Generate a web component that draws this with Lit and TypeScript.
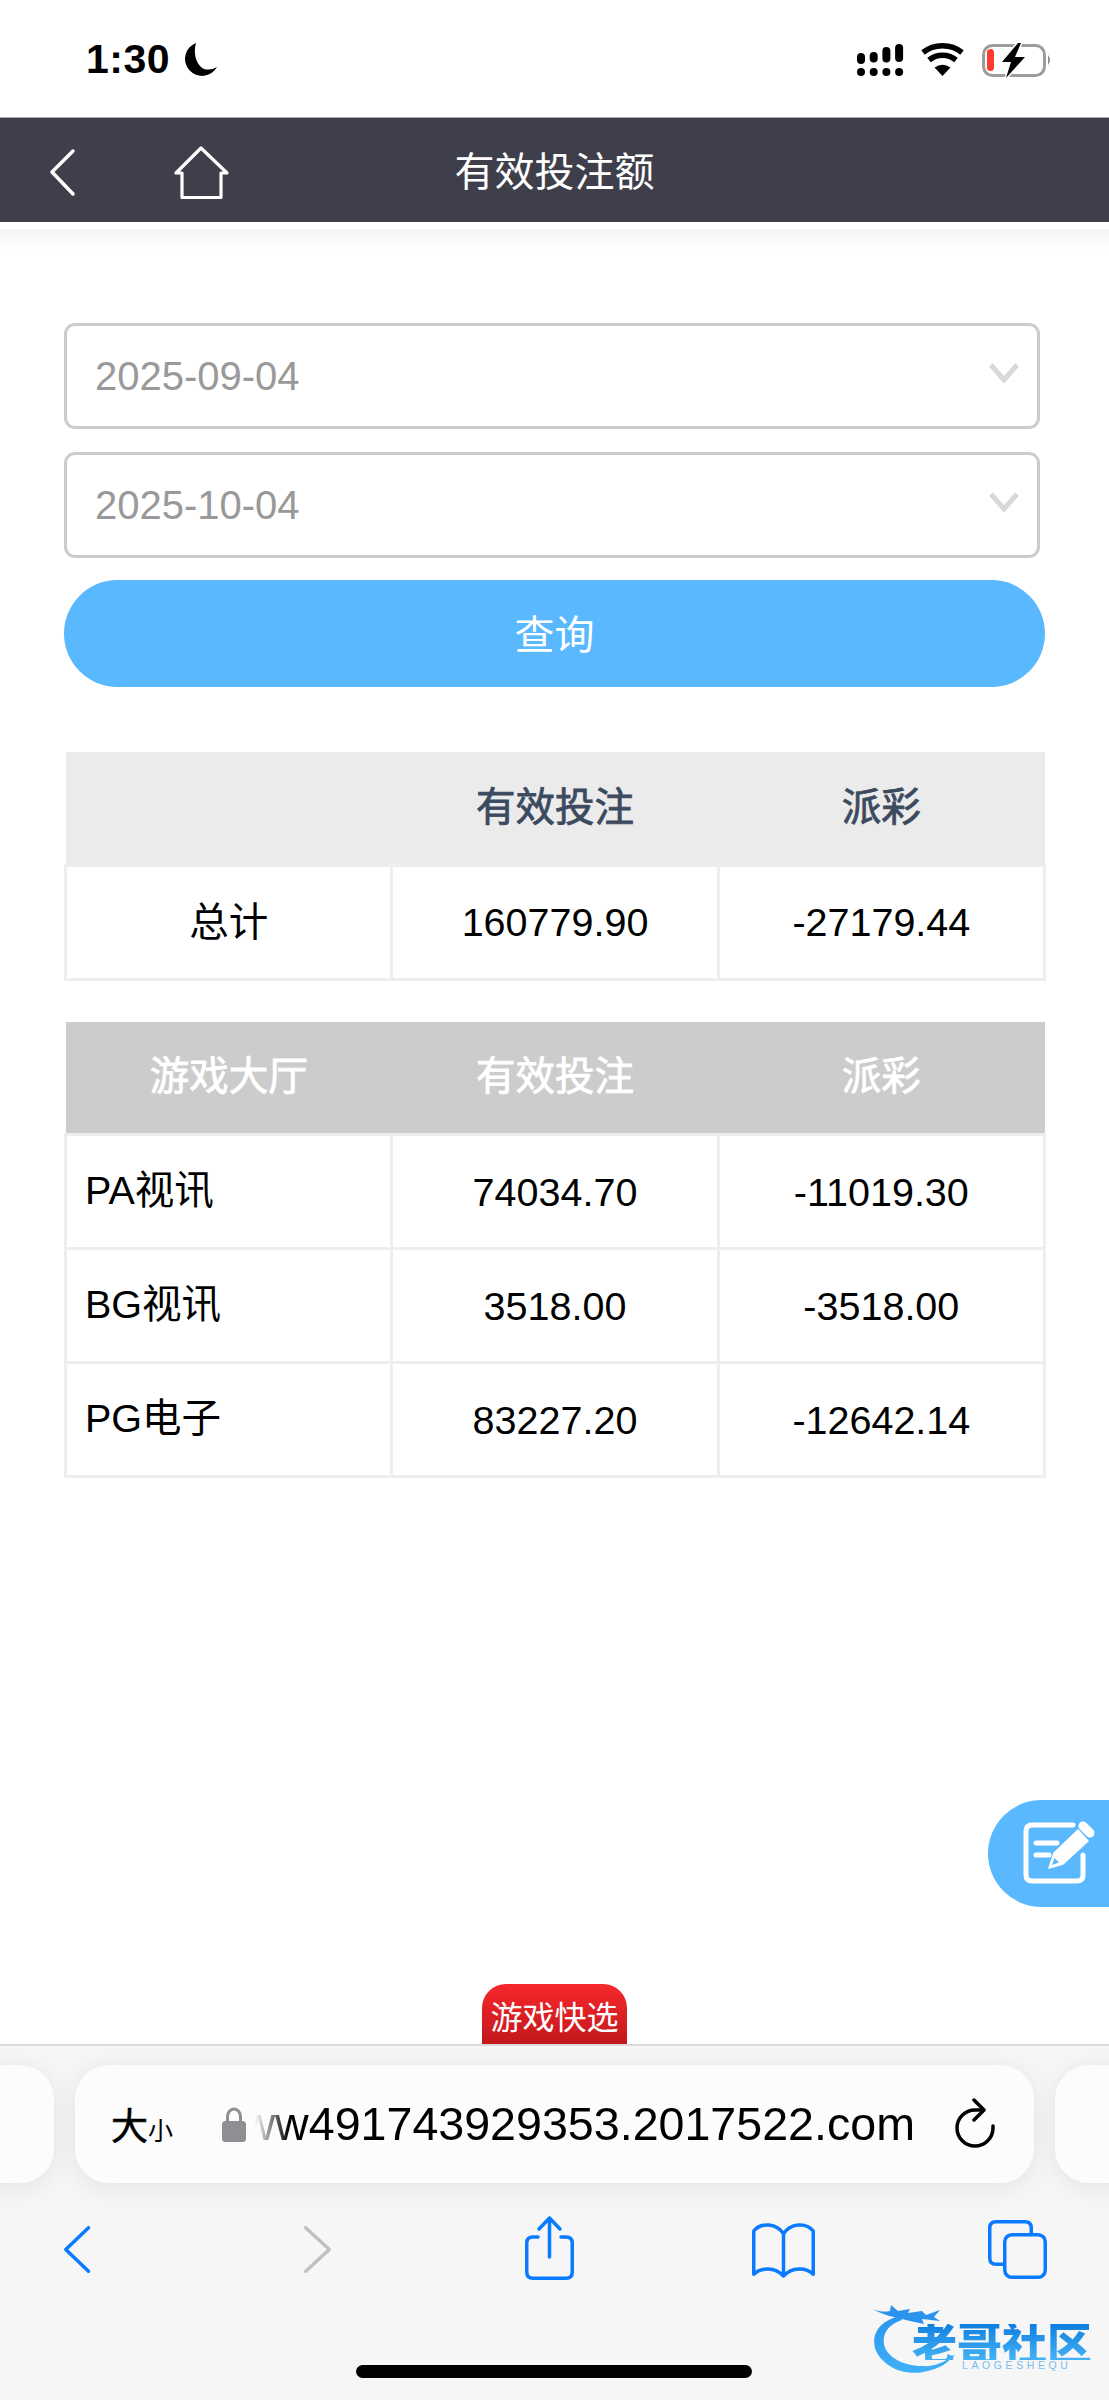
import { LitElement, html, css, svg } from "lit";
import { customElement } from "lit/decorators.js";

const CHEVRON = html`<svg class="chev" viewBox="0 0 30 20"><path d="M2 2 L15 17 L28 2" fill="none" stroke="#d9d9d9" stroke-width="5"/></svg>`;

const rows = [
  ["PA视讯", "74034.70", "-11019.30"],
  ["BG视讯", "3518.00", "-3518.00"],
  ["PG电子", "83227.20", "-12642.14"],
];

@customElement("app-root")
export class AppRoot extends LitElement {
  static styles = css`
    :host {
      display: flex;
      flex-direction: column;
      position: relative;
      width: 1109px;
      height: 2400px;
      overflow: hidden;
      background: #fff;
      font-family: "Liberation Sans", "Noto Sans CJK SC", sans-serif;
      color: #000;
    }
    .status {
      height: 117px;
      flex: none;
      box-sizing: border-box;
      padding: 2px 55px 0 86px;
      display: flex;
      align-items: center;
      justify-content: space-between;
    }
    .left { display: flex; align-items: center; gap: 14px; }
    .time { font-size: 41px; font-weight: 700; letter-spacing: 0.5px; line-height: 1; }
    .moon { width: 34px; height: 34px; display: block; }
    .sicons { display: block; width: 197px; height: 36px; margin-top: 5px; overflow: visible; }
    .nav {
      height: 105px;
      flex: none;
      background: #3f3f4b;
      border-top: 1px solid #a9a9ae;
      box-sizing: border-box;
      position: relative;
      display: flex;
      align-items: center;
      justify-content: center;
      padding-bottom: 3px;
      color: #fff;
      font-size: 40px;
    }
    .nav svg { position: absolute; left: 0; top: 0; width: 260px; height: 104px; }
    .shade {
      flex: none;
      height: 22px;
      margin-top: 7px;
      background: linear-gradient(#f4f4f4, #fff);
    }
    .main {
      flex: 1;
      display: flex;
      flex-direction: column;
      padding: 72px 63px 0 64px;
      min-height: 0;
    }
    .field {
      width: 976px;
      height: 106px;
      box-sizing: border-box;
      border: 3px solid #ccc;
      border-radius: 11px;
      display: flex;
      align-items: center;
      justify-content: space-between;
      padding: 0 18px 0 28px;
      font-size: 40px;
      color: #999;
      margin-bottom: 23px;
    }
    .chev { width: 30px; height: 20px; display: block; margin-top: -6px; }
    .go {
      width: 981px;
      height: 107px;
      box-sizing: border-box;
      padding-bottom: 4px;
      border-radius: 54px;
      background: #5ab8ff;
      color: #fff;
      font-size: 40px;
      display: flex;
      align-items: center;
      justify-content: center;
      margin-top: -1px;
    }
    table {
      width: 982px;
      table-layout: fixed;
      border-collapse: collapse;
      font-size: 39.5px;
      line-height: 44px;
      text-align: center;
    }
    .t1 { margin-top: 65px; }
    .t2 { margin-top: 41px; }
    th {
      height: 113px;
      padding: 0 0 2px;
      box-sizing: border-box;
      font-weight: 400;
      -webkit-text-stroke: 0.8px currentColor;
      background: #ebebeb;
      color: #3b4a5e;
    }
    .t2 th { background: #ccc; color: #fff; height: 113px; }
    td {
      height: 114px;
      box-sizing: border-box;
      padding: 0;
      border: 3px solid #eeeeee;
    }
    td.name { text-align: left; padding: 0 0 3px 18px; }
    td.cn { padding-bottom: 1px; }
    .tabwrap {
      margin-top: auto;
      display: flex;
      justify-content: center;
    }
    .tab {
      width: 145px;
      height: 60px;
      margin-left: -1px;
      box-sizing: border-box;
      padding-top: 2px;
      border-radius: 24px 24px 0 0;
      background: linear-gradient(#f6282d, #c2181c);
      color: #fff;
      font-size: 32px;
      display: flex;
      align-items: center;
      justify-content: center;
    }
    .fab {
      position: absolute;
      left: 988px;
      top: 1800px;
      width: 121px;
      height: 107px;
      border-radius: 54px 0 0 54px;
      background: #5ab8ff;
    }
    .fab svg { display: block; width: 121px; height: 107px; }
    .bar {
      flex: none;
      height: 356px;
      box-sizing: border-box;
      border-top: 2px solid #dadada;
      background: #f6f6f6;
      position: relative;
    }
    .pills {
      display: flex;
      gap: 21px;
      margin: 19px -60px 0 -59px;
      padding: 0;
    }
    .pill {
      height: 118px;
      border-radius: 34px;
      background: #fcfcfc;
      box-shadow: 0 4px 26px rgba(0, 0, 0, 0.08);
      flex: none;
    }
    .side { width: 113px; }
    .url {
      width: 959px;
      box-sizing: border-box;
      display: flex;
      align-items: center;
      padding: 0 36px;
    }
    .aa { display: flex; align-items: baseline; width: 111px; flex: none; }
    .aa b { font-weight: 400; -webkit-text-stroke: 0.6px #000; font-size: 37px; }
    .aa i { font-style: normal; font-size: 25px; }
    .lock { width: 24px; height: 35px; display: block; flex: none; }
    .addr {
      width: 660px;
      flex: none;
      margin-left: 9px;
      overflow: hidden;
      display: flex;
      justify-content: flex-end;
      white-space: nowrap;
      font-size: 46.6px;
      line-height: 60px;
      -webkit-mask-image: linear-gradient(90deg, transparent, #000 34px);
      mask-image: linear-gradient(90deg, transparent, #000 34px);
    }
    .reload { width: 42px; height: 52px; display: block; flex: none; margin-left: 39px; }
    .tools {
      display: flex;
      justify-content: space-between;
      padding: 0 62px 0 47px;
      margin-top: 30px;
    }
    .tools svg { width: 60px; height: 70px; display: block; overflow: visible; }
    .logo {
      position: absolute;
      left: 872px;
      top: 256px;
      width: 225px;
      height: 74px;
    }
    .logo svg { position: absolute; left: 0; top: 0; width: 100px; height: 74px; filter: blur(0.4px); }
    .logo .cn {
      position: absolute;
      left: 40px;
      top: 22px;
      font: 900 45px/36px "Noto Sans CJK SC", sans-serif;
      white-space: nowrap;
      color: #1f93ea;
      background: linear-gradient(#0f7fe0, #45b2f5);
      -webkit-background-clip: text;
      background-clip: text;
      -webkit-text-fill-color: transparent;
    }
    .logo .en {
      position: absolute;
      left: 90px;
      top: 58px;
      font-size: 10.5px;
      line-height: 11px;
      letter-spacing: 3.6px;
      color: #78bdf0;
      white-space: nowrap;
    }
    .home {
      position: absolute;
      left: 356px;
      top: 319px;
      width: 396px;
      height: 13px;
      border-radius: 7px;
      background: #000;
    }
  `;

  render() {
    return html`
      <div class="status">
        <div class="left">
          <span class="time">1:30</span>
          <svg class="moon" viewBox="0 0 34 34"><path d="M12 0 A17 17 0 1 0 33 24 A17 17 0 0 1 20 26 C12 22 9 10 12 0Z" fill="#000"/></svg>
        </div>
        <svg class="sicons" viewBox="0 0 197 36">
          ${[[9,11],[8,10.5],[3,15.5],[0,18]].map(([y,h],i)=>svg`
            <rect x=${i*12.7} y=${y} width="8" height=${h} rx="4" fill="#000"/>
            <rect x=${i*12.7} y="24" width="8" height="8" rx="4" fill="#000"/>`)}
          <path d="M66 8.500 C77 -0.500 94 -0.500 105 8.500" fill="none" stroke="#000" stroke-width="5.500"/>
          <path d="M72 16 C80 9.500 91 9.500 99 16" fill="none" stroke="#000" stroke-width="5.500"/>
          <path d="M77.500 23.500 Q85.500 18 93.500 23.500 L85.500 32Z" fill="#000"/>
          <rect x="126.500" y="1.500" width="61" height="30" rx="9" fill="none" stroke="#9c9c9c" stroke-width="3"/>
          <path d="M191 11 Q195 16 191 21Z" fill="#8f8f8f"/>
          <rect x="130" y="5" width="7" height="22" rx="3.500" fill="#ff3b30"/>
          <path d="M161 -1 L145 18 H154 L149 34 L168 13 H158 L164 -1Z" fill="#000" stroke="#fff" stroke-width="3" paint-order="stroke"/>
        </svg>
      </div>
      <div class="nav">
        <svg viewBox="0 0 260 104" fill="none" stroke="#fff" stroke-width="3.500" stroke-linecap="round" stroke-linejoin="round">
          <path d="M73 33 L52 54 L73 76"/>
          <path d="M201 30 L176 55 H182 V79.500 H221 V55 H227Z" stroke-width="3.200"/>
        </svg>
        有效投注额
      </div>
      <div class="shade"></div>
      <div class="main">
        <div class="field">2025-09-04${CHEVRON}</div>
        <div class="field">2025-10-04${CHEVRON}</div>
        <div class="go">查询</div>
        <table class="t1">
          <thead><tr><th></th><th>有效投注</th><th>派彩</th></tr></thead>
          <tbody><tr><td class="cn">总计</td><td>160779.90</td><td>-27179.44</td></tr></tbody>
        </table>
        <table class="t2">
          <thead><tr><th>游戏大厅</th><th>有效投注</th><th>派彩</th></tr></thead>
          <tbody>
            ${rows.map(r => html`<tr><td class="name">${r[0]}</td><td>${r[1]}</td><td>${r[2]}</td></tr>`)}
          </tbody>
        </table>
        <div class="tabwrap"><div class="tab">游戏快选</div></div>
      </div>
      <div class="fab">
        <svg viewBox="0 0 121 107" fill="none" stroke="#fff" stroke-width="5" stroke-linecap="round" stroke-linejoin="round">
          <path d="M85 25 H44 Q38 25 38 31 V75 Q38 81 44 81 H89 Q95 81 95 75 V55"/>
          <path d="M48 43 H69 M48 55 H61"/>
          <path d="M61 68 L66 53 L90 30 L100 41 L75 64Z" fill="#fff" stroke-width="1.500"/>
          <path d="M64 65 L66.500 58 L71 62.500Z" fill="#5ab8ff" stroke="none"/>
          <path d="M95 26 L102 33" stroke-width="9"/>
        </svg>
      </div>
      <div class="bar">
        <div class="pills">
          <div class="pill side"></div>
          <div class="pill url">
            <span class="aa"><b>大</b><i>小</i></span>
            <svg class="lock" viewBox="0 0 24 35"><path d="M5.500 16 V9.500 a6.500 7.500 0 0 1 13 0 V16" fill="none" stroke="#8e8e93" stroke-width="3"/><rect x="0" y="14" width="24" height="21" rx="3.500" fill="#8e8e93"/></svg>
            <span class="addr">www491743929353.2017522.com</span>
            <svg class="reload" viewBox="0 0 42 52" fill="none" stroke="#000" stroke-width="3.500" stroke-linecap="round" stroke-linejoin="round">
              <path d="M26 12 H21 A18 18 0 1 0 39 30 V28"/>
              <path d="M20 2 L30 12 L20 22"/>
            </svg>
          </div>
          <div class="pill side"></div>
        </div>
        <div class="tools">
          <svg viewBox="0 0 60 70" fill="none" stroke="#0a7aff" stroke-width="3.500" stroke-linecap="round" stroke-linejoin="round"><path d="M41.500 14.750 L18.750 36.500 L41.500 58.250"/></svg>
          <svg viewBox="0 0 60 70" fill="none" stroke="#c0c0c0" stroke-width="3.500" stroke-linecap="round" stroke-linejoin="round"><path d="M23.750 14.750 L47.250 36.500 L23.750 58.250"/></svg>
          <svg viewBox="0 0 60 70" fill="none" stroke="#0a7aff" stroke-width="3.500" stroke-linecap="round" stroke-linejoin="round">
            <path d="M21 24 H16 Q9.750 24 9.750 30 V59 Q9.750 65.250 16 65.250 H49 Q55.250 65.250 55.250 59 V30 Q55.250 24 49 24 H44"/>
            <path d="M32.500 44 V5 M22 16 L32.500 5 L43 16"/>
          </svg>
          <svg viewBox="0 0 60 70" fill="none" stroke="#0a7aff" stroke-width="3.500" stroke-linecap="round" stroke-linejoin="round">
            <path d="M31.500 21 C25 10 9 9 1.750 18 V61.250 C9 54 23 54 31.500 63 C40 54 54 54 61.250 61.250 V18 C54 9 38 10 31.500 21Z M31.500 21 V63"/>
          </svg>
          <svg viewBox="0 0 60 70" fill="none" stroke="#0a7aff" stroke-width="3.500" stroke-linecap="round" stroke-linejoin="round">
            <path d="M44.250 21 V15 Q44.250 8.750 38 8.750 H9 Q2.750 8.750 2.750 15 V45 Q2.750 51.250 9 51.250 H17"/>
            <rect x="17.750" y="21.750" width="40.500" height="42.500" rx="7"/>
          </svg>
        </div>
        <div class="logo">
          <svg viewBox="0 0 100 74">
            <defs><linearGradient id="lg" x1="0" y1="0" x2="0" y2="1"><stop offset="0" stop-color="#2a97ee"/><stop offset="1" stop-color="#3fb0f6"/></linearGradient></defs>
            <path d="M28 14 C10 18 -1 30 3 46 C8 62 30 76 56 69 C68 66 78 60 83 52 C74 60 62 65 50 64 C30 64 14 54 12 42 C10 30 18 22 30 18Z" fill="url(#lg)"/>
            <path d="M0 7 C8 10 14 10 18 9 L19 3 L26 9 L38 7 L36 11 L50 9 L54 13 L68 8 L62 15 L68 19 L50 17 L52 22 L38 19 L30 17 C22 15 14 14 0 7Z" fill="#2b93ee"/>
          </svg>
          <span class="cn">老哥社区</span>
          <span class="en">LAOGESHEQU</span>
        </div>
        <div class="home"></div>
      </div>
    `;
  }
}
